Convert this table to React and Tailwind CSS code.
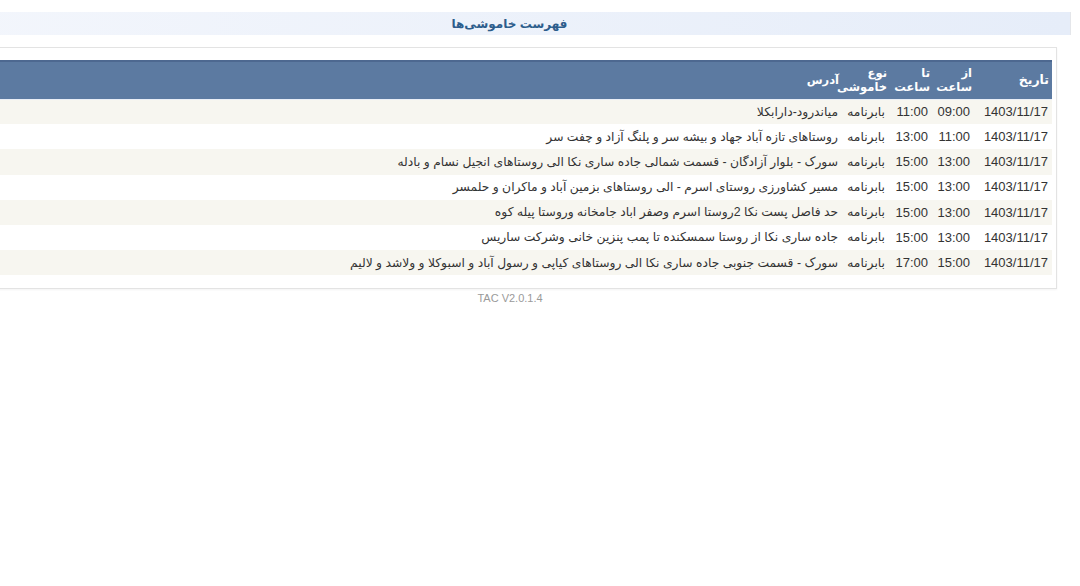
import React from "react";

const rows = [
  ["1403/11/17", "09:00", "11:00", "بابرنامه", "میاندرود-دارابکلا"],
  ["1403/11/17", "11:00", "13:00", "بابرنامه", "روستاهای تازه آباد جهاد و بیشه سر و پلنگ آزاد و چفت سر"],
  ["1403/11/17", "13:00", "15:00", "بابرنامه", "سورک - بلوار آزادگان - قسمت شمالی جاده ساری نکا الی روستاهای انجیل نسام و بادله"],
  ["1403/11/17", "13:00", "15:00", "بابرنامه", "مسیر کشاورزی روستای اسرم - الی روستاهای بزمین آباد و ماکران و حلمسر"],
  ["1403/11/17", "13:00", "15:00", "بابرنامه", "حد فاصل پست نکا 2روستا اسرم وصفر اباد جامخانه وروستا پیله کوه"],
  ["1403/11/17", "13:00", "15:00", "بابرنامه", "جاده ساری نکا از روستا سمسکنده تا پمب پنزین خانی وشرکت ساریس"],
  ["1403/11/17", "15:00", "17:00", "بابرنامه", "سورک - قسمت جنوبی جاده ساری نکا الی روستاهای کیاپی و رسول آباد و اسبوکلا و ولاشد و لالیم"],
];

export default function App() {
  return (
    <div
      dir="ltr"
      className="w-[1080px] h-[586px] overflow-hidden bg-white"
      style={{ fontFamily: '"Liberation Sans", "DejaVu Sans", Arial, sans-serif' }}
    >
      <div className="w-[1122px] ml-[-51px] pt-[12px]">
        <div
          dir="rtl"
          className="h-[23px] bg-gradient-to-r from-[#f3f6fc] to-[#e6edf9] border-r border-[#e4e6ea] flex items-center justify-center text-[#2d5d8c] font-bold text-[12px]"
        >
          فهرست خاموشی‌ها
        </div>
        <div className="mt-[12px] mx-[14px] border border-[#e3e3e3] px-[4px] pt-[12px] pb-[13px] shadow-[0_1px_2px_rgba(0,0,0,0.05)]">
          <table dir="rtl" className="w-full table-fixed border-collapse text-[13px] text-[#333]">
            <colgroup>
              <col className="w-[78px]" />
              <col className="w-[42px]" />
              <col className="w-[43px]" />
              <col className="w-[46px]" />
              <col />
            </colgroup>
            <thead>
              <tr className="h-[38px] bg-[#5c7aa1] text-white font-bold text-[11.5px] border-t-2 border-[#4d6890] border-b border-b-[#e9eef6]">
                <th className="text-right align-middle px-[3px] leading-[14px] text-[12.5px]">تاریخ</th>
                <th className="text-right align-middle px-[2px] leading-[14px]">از ساعت</th>
                <th className="text-right align-middle px-[2px] leading-[14px]">تا ساعت</th>
                <th className="text-right align-middle px-[2px] leading-[14px]">نوع خاموشی</th>
                <th className="text-right align-middle px-[4px] leading-[14px]">آدرس</th>
              </tr>
            </thead>
            <tbody>
              {rows.map((r, i) => (
                <tr key={i} className={i % 2 === 0 ? "h-[25.2px] bg-[#f7f6f0]" : "h-[25.2px] bg-white"}>
                  <td className="text-right px-[4px] whitespace-nowrap">{r[0]}</td>
                  <td className="text-right px-[4px] whitespace-nowrap">{r[1]}</td>
                  <td className="text-right px-[4px] whitespace-nowrap">{r[2]}</td>
                  <td className="text-right px-[4px] whitespace-nowrap text-[12.3px]">{r[3]}</td>
                  <td className="text-right px-[5px] whitespace-nowrap text-[12.3px]">{r[4]}</td>
                </tr>
              ))}
            </tbody>
          </table>
        </div>
        <div dir="ltr" className="text-center text-[11px] text-[#9a9a9a] mt-[3px] leading-[13px]">
          TAC V2.0.1.4
        </div>
      </div>
    </div>
  );
}
